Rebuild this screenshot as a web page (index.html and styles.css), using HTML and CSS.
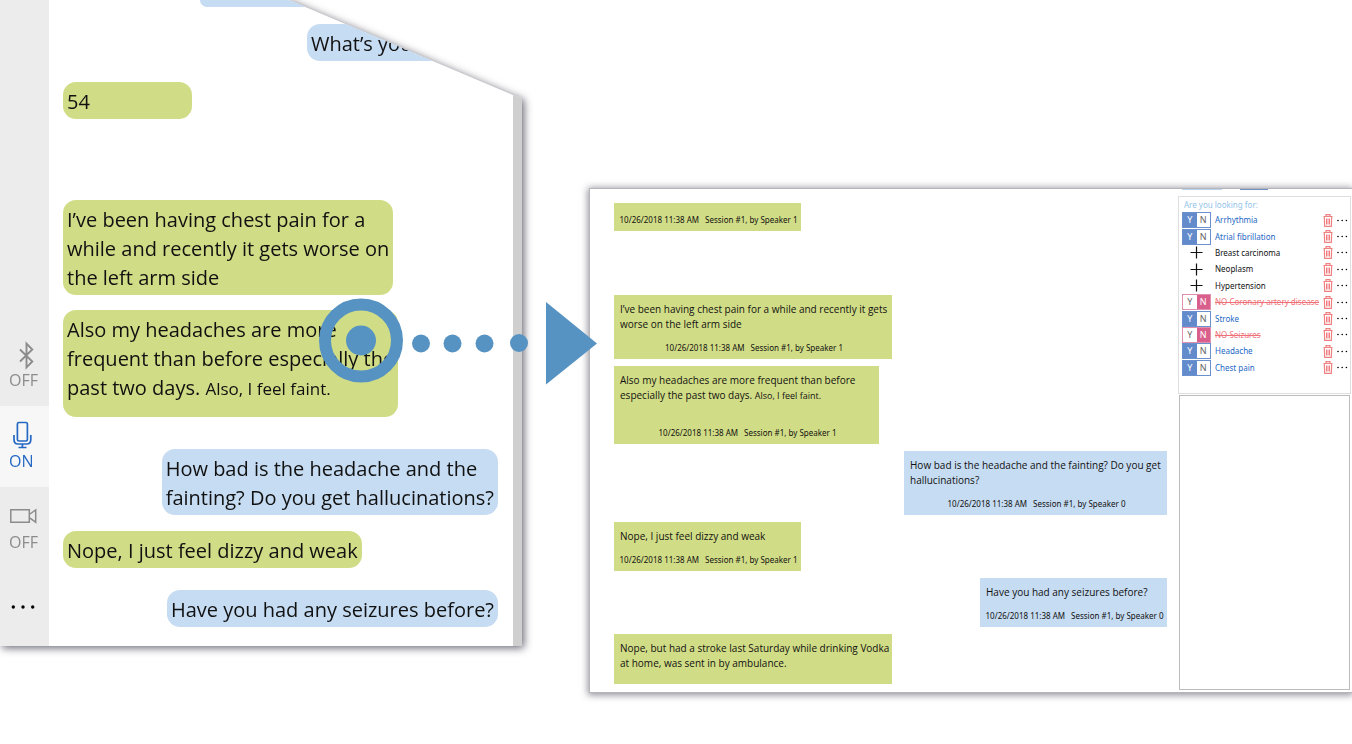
FILE: index.html
```html
<!DOCTYPE html>
<html lang="en">
<head>
<meta charset="utf-8">
<title>Session transcript</title>
<link rel="stylesheet" href="styles.css">
</head>
<body>
<svg class="defs" width="0" height="0" aria-hidden="true">
  <symbol id="trash" viewBox="0 0 10 13">
    <path d="M0.5 2.5h9M3 2.5V0.7h4v1.8M1.3 2.5l.4 9.8h6.6l.4-9.8" fill="none" stroke="#f08080" stroke-width="1.2"/>
    <path d="M3.5 4.5v6M5 4.5v6M6.5 4.5v6" fill="none" stroke="#ee6e70" stroke-width=".9"/>
  </symbol>
  <symbol id="more" viewBox="0 0 11 3">
    <circle cx="1" cy="1.5" r=".8"/><circle cx="5.2" cy="1.5" r=".8"/><circle cx="9.4" cy="1.5" r=".8"/>
  </symbol>
  <symbol id="plus" viewBox="0 0 13 13">
    <path d="M6.5 0.5v12M0.5 6.5h12" fill="none" stroke="#111" stroke-width="1.2"/>
  </symbol>
</svg>
<main class="stage">
  <section class="phone-shadow" aria-label="Live conversation">
    <div class="phone">
      <nav class="rail">
        <button class="rail-item" type="button">
          <svg class="rail-icon" viewBox="0 0 49 32"><path d="M20 10.5l12.3 12-5.8 6V4.500l5.800 6L20 22.500" fill="none" stroke="#8c8c8c" stroke-width="1.900"/></svg>
          <span>OFF</span>
        </button>
        <button class="rail-item on" type="button">
          <svg class="rail-icon" viewBox="0 0 49 32"><g fill="none" stroke="#2468c4" stroke-width="1.700"><rect x="17.400" y="2.500" width="10" height="18.500" rx="1.500"/><path d="M14 15v4.500q0 4.500 4 4.500h8.800q4 0 4-4.500V15M22.400 24v3.500M18.500 27.500h8"/></g></svg>
          <span>ON</span>
        </button>
        <button class="rail-item" type="button">
          <svg class="rail-icon" viewBox="0 0 49 32"><path d="M10.800 8.800h18.500v12.500H10.800zM29.300 13.500l6.400-4.500v12.200l-6.400-4.500" fill="none" stroke="#8c8c8c" stroke-width="1.500"/></svg>
          <span>OFF</span>
        </button>
        <button class="rail-more" type="button" aria-label="More">
          <svg class="rail-icon" viewBox="0 0 49 32"><circle cx="13.300" cy="16" r="1.700"/><circle cx="23" cy="16" r="1.700"/><circle cx="32.700" cy="16" r="1.700"/></svg>
        </button>
      </nav>
      <div class="chat">
        <p class="bubble blue cut"></p>
        <p class="bubble blue question">What’s your age?</p>
        <p class="bubble green age">54</p>
        <p class="bubble green chest">I’ve been having chest pain for a<br>while and recently it gets worse on<br>the left arm side</p>
        <p class="bubble green faint">Also my headaches are more<br>frequent than before especially the<br>past two days. <small>Also, I feel faint.</small></p>
        <p class="bubble blue">How bad is the headache and the<br>fainting? Do you get hallucinations?</p>
        <p class="bubble green">Nope, I just feel dizzy and weak</p>
        <p class="bubble blue last">Have you had any seizures before?</p>
      </div>
      <div class="scroll"></div>
    </div>
  </section>

  <section class="report" aria-label="Session report">
    <div class="log">
      <article class="note green narrow bare"><footer><span>10/26/2018 11:38 AM</span><span>Session #1, by Speaker 1</span></footer></article>
      <article class="note green wide"><p>I’ve been having chest pain for a while and recently it gets<br>worse on the left arm side</p><footer><span>10/26/2018 11:38 AM</span><span>Session #1, by Speaker 1</span></footer></article>
      <article class="note green medium"><p>Also my headaches are more frequent than before<br>especially the past two days. <small>Also, I feel faint.</small></p><footer><span>10/26/2018 11:38 AM</span><span>Session #1, by Speaker 1</span></footer></article>
      <article class="note blue medium"><p>How bad is the headache and the fainting? Do you get<br>hallucinations?</p><footer><span>10/26/2018 11:38 AM</span><span>Session #1, by Speaker 0</span></footer></article>
      <article class="note green narrow"><p>Nope, I just feel dizzy and weak</p><footer><span>10/26/2018 11:38 AM</span><span>Session #1, by Speaker 1</span></footer></article>
      <article class="note blue narrow"><p>Have you had any seizures before?</p><footer><span>10/26/2018 11:38 AM</span><span>Session #1, by Speaker 0</span></footer></article>
      <article class="note green wide tail"><p>Nope, but had a stroke last Saturday while drinking Vodka<br>at home, was sent in by ambulance.</p></article>
    </div>
    <aside class="side">
      <div class="tabs"><i></i><i></i></div>
      <div class="findings">
        <h2>Are you looking for:</h2>
        <ul>
          <li class="yes"><div class="yn"><button type="button">Y</button><button type="button">N</button></div><span>Arrhythmia</span><button type="button" class="icon" aria-label="Delete"><svg class="trash"><use href="#trash"/></svg></button><button type="button" class="icon" aria-label="More"><svg class="more"><use href="#more"/></svg></button></li>
          <li class="yes"><div class="yn"><button type="button">Y</button><button type="button">N</button></div><span>Atrial fibrillation</span><button type="button" class="icon" aria-label="Delete"><svg class="trash"><use href="#trash"/></svg></button><button type="button" class="icon" aria-label="More"><svg class="more"><use href="#more"/></svg></button></li>
          <li><button type="button" class="icon add" aria-label="Add"><svg class="plus"><use href="#plus"/></svg></button><span>Breast carcinoma</span><button type="button" class="icon" aria-label="Delete"><svg class="trash"><use href="#trash"/></svg></button><button type="button" class="icon" aria-label="More"><svg class="more"><use href="#more"/></svg></button></li>
          <li><button type="button" class="icon add" aria-label="Add"><svg class="plus"><use href="#plus"/></svg></button><span>Neoplasm</span><button type="button" class="icon" aria-label="Delete"><svg class="trash"><use href="#trash"/></svg></button><button type="button" class="icon" aria-label="More"><svg class="more"><use href="#more"/></svg></button></li>
          <li><button type="button" class="icon add" aria-label="Add"><svg class="plus"><use href="#plus"/></svg></button><span>Hypertension</span><button type="button" class="icon" aria-label="Delete"><svg class="trash"><use href="#trash"/></svg></button><button type="button" class="icon" aria-label="More"><svg class="more"><use href="#more"/></svg></button></li>
          <li class="no"><div class="yn"><button type="button">Y</button><button type="button">N</button></div><span>NO Coronary artery disease</span><button type="button" class="icon" aria-label="Delete"><svg class="trash"><use href="#trash"/></svg></button><button type="button" class="icon" aria-label="More"><svg class="more"><use href="#more"/></svg></button></li>
          <li class="yes"><div class="yn"><button type="button">Y</button><button type="button">N</button></div><span>Stroke</span><button type="button" class="icon" aria-label="Delete"><svg class="trash"><use href="#trash"/></svg></button><button type="button" class="icon" aria-label="More"><svg class="more"><use href="#more"/></svg></button></li>
          <li class="no"><div class="yn"><button type="button">Y</button><button type="button">N</button></div><span>NO Seizures</span><button type="button" class="icon" aria-label="Delete"><svg class="trash"><use href="#trash"/></svg></button><button type="button" class="icon" aria-label="More"><svg class="more"><use href="#more"/></svg></button></li>
          <li class="yes"><div class="yn"><button type="button">Y</button><button type="button">N</button></div><span>Headache</span><button type="button" class="icon" aria-label="Delete"><svg class="trash"><use href="#trash"/></svg></button><button type="button" class="icon" aria-label="More"><svg class="more"><use href="#more"/></svg></button></li>
          <li class="yes"><div class="yn"><button type="button">Y</button><button type="button">N</button></div><span>Chest pain</span><button type="button" class="icon" aria-label="Delete"><svg class="trash"><use href="#trash"/></svg></button><button type="button" class="icon" aria-label="More"><svg class="more"><use href="#more"/></svg></button></li>
        </ul>
      </div>
      <textarea class="memo" aria-label="Notes"></textarea>
    </aside>
  </section>

  <svg class="pointer" viewBox="0 0 280 88" aria-hidden="true">
    <circle cx="42" cy="42.500" r="36" fill="none" stroke="#5793c2" stroke-width="12"/>
    <g fill="#5793c2"><circle cx="42" cy="42.500" r="15"/><circle cx="102" cy="45.500" r="9"/><circle cx="133.500" cy="45.500" r="9"/><circle cx="165.500" cy="45.500" r="9"/><circle cx="200" cy="45" r="9"/><path d="M227 4l51 41.500-51 41z"/></g>
  </svg>
</main>
</body>
</html>
```

FILE: styles.css
```css
* { box-sizing: border-box; }
body { margin: 0; min-height: 100vh; background: #fff; color: #111; font-family: "Open Sans", "Noto Sans", sans-serif; }
p, h2, ul { margin: 0; padding: 0; }
button { font: inherit; color: inherit; background: none; border: 0; padding: 0; display: block; }
svg { display: block; }
.defs { position: absolute; }
.stage { position: relative; display: flex; gap: 67px; align-items: flex-start; min-height: 100vh; overflow: hidden; }
.green { background: #d1dd86; }
.blue { background: #c6dcf2; }

/* Live conversation */
.phone-shadow { flex: none; filter: drop-shadow(2px 2px 4px rgba(20, 20, 40, .65)); }
.phone { display: flex; width: 522px; background: #fff; clip-path: polygon(0 0, 289px 0, 513px 95px, 522px 98px, 100% 100%, 0 100%); }
.rail { flex: none; width: 49px; display: flex; flex-direction: column; justify-content: flex-end; background: #ececec; }
.rail-item { height: 81px; padding: 14px 0 17px; text-align: left; font-size: 16px; line-height: 18px; color: #8c8c8c; }
.rail-item.on { background: #f7f7f7; color: #2468c4; }
.rail-item span { display: block; padding-left: 9px; }
.rail-icon { width: 49px; height: 32px; }
.rail-more { height: 78px; display: flex; align-items: center; }
.chat { flex: 1; display: flex; flex-direction: column; align-items: flex-start; padding: 0 15px 19px 14px; }
.scroll { width: 9px; background: #cfcfcf; }
.bubble { margin-top: 16px; padding: 5px 4px 3px; border-radius: 13px; font-size: 20px; line-height: 29px; white-space: nowrap; }
.bubble.blue { align-self: flex-end; }
.bubble small { font-size: 17px; }
.bubble.cut { width: 298px; height: 7px; margin: 0; padding: 0; border-radius: 0 0 13px 13px; }
.bubble.question { width: 191px; margin-top: 17px; }
.bubble.age { width: 129px; margin-top: 21px; }
.bubble.chest { margin-top: 81px; }
.bubble.faint { min-width: 334px; margin-top: 15px; padding-bottom: 14px; margin-bottom: 16px; }
.bubble.last { margin-top: 22px; }

/* Session report */
.report { flex: 1; display: flex; gap: 11px; margin-top: 188px; padding: 0 1px 2px 0; background: #fff; border: 1px solid #b4b6ba; border-right: 0; box-shadow: 0 1px 7px 1px rgba(30, 30, 50, .5); }
.log { flex: 1; display: flex; flex-direction: column; align-items: flex-start; gap: 7px; padding: 14px 0 6px 24px; }
.note { display: flex; flex-direction: column; justify-content: space-between; min-height: 49px; padding: 7px 4px 5px 6px; font-size: 10px; line-height: 15px; white-space: nowrap; }
.note small { font-size: 9px; }
.note footer { display: flex; justify-content: center; gap: 6px; font-family: "Noto Sans", sans-serif; font-size: 8px; line-height: 12px; }
.note.blue { align-self: flex-end; }
.narrow { width: 187px; }
.medium { width: 263px; min-height: 64px; }
.wide { width: 278px; min-height: 64px; }
.green.medium { width: 265px; min-height: 78px; }
.bare { min-height: 28px; margin-bottom: 57px; justify-content: flex-end; }
.tail { min-height: 50px; }
.side { flex: none; width: 173px; display: flex; flex-direction: column; }
.tabs { display: flex; gap: 18px; height: 7px; padding-left: 4px; }
.tabs i { width: 40px; height: 1px; background: #b9d4ec; }
.tabs i + i { width: 28px; background: #6e8fc4; }
.findings { height: 198px; border: 1px solid #dedede; padding: 0 2px 0 3px; font-family: "Noto Sans", sans-serif; }
.findings h2 { padding-left: 2px; font-size: 8px; line-height: 15px; font-weight: 400; color: #94c4ea; }
.findings ul { list-style: none; display: grid; grid-template-rows: repeat(10, 1fr); height: 164px; }
.findings li { display: grid; grid-template-columns: 29px minmax(0, 1fr) 10px 11px; column-gap: 4px; align-items: center; font-size: 8px; line-height: 12px; white-space: nowrap; }
.findings .yes { color: #2468c4; }
.no { color: #f07078; }
.no > span { text-decoration: line-through; }
.yn { display: flex; height: 16px; border: 1px solid #6a90d0; font-size: 9px; }
.yn button { flex: 1; color: #666; line-height: 14px; text-align: center; }
.yes .yn button:first-child { background: #638bcb; color: #fff; }
.no .yn { border-color: #e090ac; }
.no .yn button:last-child { background: #d9608c; color: #fff; }
.add { justify-self: center; }
.plus { width: 13px; height: 13px; }
.trash { width: 10px; height: 13px; }
.more { width: 11px; height: 3px; }
.memo { flex: 1; width: 171px; margin: 1px 0 0 1px; border: 1px solid #bcbcbc; border-radius: 0; background: #fff; resize: none; outline: 0; }

/* Arrow linking the two windows */
.pointer { position: absolute; left: 319px; top: 298px; width: 280px; height: 88px; }
```
